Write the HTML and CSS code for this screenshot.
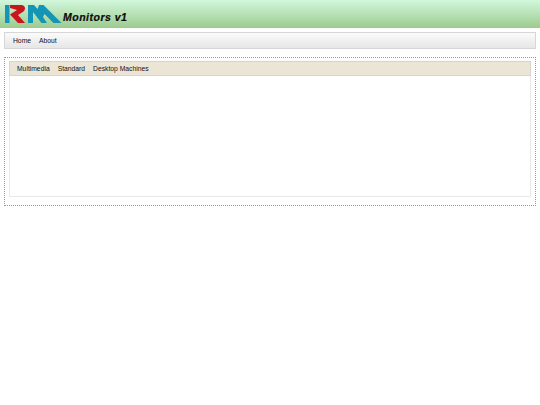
FILE: index.html
```html
<!DOCTYPE html>
<html lang="en">
<head>
<meta charset="utf-8">
<title>RM Monitors v1</title>
<link rel="stylesheet" href="styles.css">
</head>
<body>
<header class="banner">
  <svg class="logo" width="62" height="24" viewBox="0 0 62 24" aria-hidden="true">
    <path d="M5 5h4.500v18H5z" fill="#1595b5"/>
    <path d="M10 5h11q4 0 4 3.500q0 2.500-3 4l-4 2.500 7 8h-7l-8-8.500 7-4.500-7-2z" fill="#c8161c"/>
    <path d="M28 5h6l3.500 4 1.500-4h4.500l18 18h-8l-9-9-1.500 3 4 6h-5.500l-8.500-11v11h-5z" fill="#1595b5"/>
  </svg>
  <span class="title">Monitors v1</span>
</header>
<nav class="menu">
  <a class="menu-item">Home</a>
  <a class="menu-item">About</a>
</nav>
<section class="panel">
  <div class="inner">
    <div class="tabs">
      <a class="tab">Multimedia</a>
      <a class="tab">Standard</a>
      <a class="tab">Desktop Machines</a>
    </div>
    <div class="content"></div>
  </div>
</section>
</body>
</html>
```
FILE: styles.css
```css
* { box-sizing: border-box; }
html, body { margin: 0; padding: 0; background: #fff; }
body { font-family: "Liberation Sans", Arial, sans-serif; font-size: 6.750px; color: #111; width: 540px; height: 405px; overflow: hidden; }
.banner { height: 28px; display: flex; align-items: flex-start; background: linear-gradient(#d2f7dc, #9ccb8e); }
.logo { flex: none; }
.title { margin: 10px 0 0 1px; font-size: 10.500px; font-weight: bold; font-style: italic; color: #0a0a0a; letter-spacing: 0.5px; line-height: 14px; -webkit-text-stroke: 0.2px #0a0a0a; }
.menu { height: 17px; margin: 4px 4px 0; display: flex; align-items: center; gap: 8px; padding: 1px 0 0 8px; border: 1px solid #d6d6d6; background: linear-gradient(#fbfbfb, #e6e6e6); }
.menu-item, .tab { font-size: 6.750px; line-height: 10px; }
.panel { height: 149px; margin: 8px 4px 0; padding: 3px 4px; border: 1px dotted #999; }
.inner { height: 136px; border: 1px solid #e8e8e8; border-top: 0; display: flex; flex-direction: column; }
.tabs { height: 15px; margin: 0 -1px; display: flex; align-items: center; gap: 8px; padding: 0 0 0 7px; background: #ebe5d6; border: 1px solid #d9d3cc; }
.content { flex: 1; background: #fff; }
```
